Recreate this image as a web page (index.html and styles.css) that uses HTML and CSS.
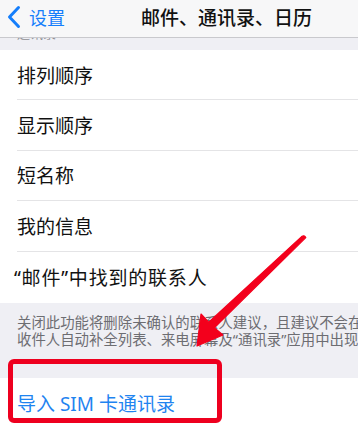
FILE: index.html
```html
<!DOCTYPE html>
<html lang="zh-CN">
<head>
  <meta charset="UTF-8" />
  <meta name="viewport" content="width=device-width, initial-scale=1.0"/>
  <title>邮件、通讯录、日历</title>
  <link rel="stylesheet" href="styles.css">
</head>
<body>
  <div class="navbar">
    <div class="back">
      <svg class="chevron" width="16" height="24" viewBox="0 0 16 24">
        <path d="M12.5 2.5 L3.5 12 L12.5 21.5" fill="none" stroke="#157efb" stroke-width="3" stroke-linecap="round" stroke-linejoin="round"/>
      </svg>
      <span>设置</span>
    </div>
    <div class="title">邮件、通讯录、日历</div>
  </div>

  <div class="group-header"><span>通讯录</span></div>

  <ul class="list">
    <li>排列顺序</li>
    <li>显示顺序</li>
    <li>短名称</li>
    <li>我的信息</li>
    <li class="last">“邮件”中找到的联系人</li>
  </ul>

  <div class="group-footer">
    关闭此功能将删除未确认的联系人建议，且建议不会在<br>
    收件人自动补全列表、来电屏幕及“通讯录”应用中出现。
  </div>

  <ul class="list">
    <li class="link">导入 SIM 卡通讯录</li>
  </ul>

  <!-- annotation drawn over the screenshot -->
  <div class="mark-box"></div>
  <svg class="mark-arrow" width="358" height="425" viewBox="0 0 358 425">
    <path d="M197 346 L201 314 L208.7 322.2 L301.6 236.6 Q304.4 234.5 305.8 237.6 L214.3 327.8 L223 335 Z"
          fill="#f3001c" stroke="#f3001c" stroke-width="1.2" stroke-linejoin="round"/>
  </svg>
</body>
</html>
```

FILE: styles.css
```css
body {
  margin: 0;
  font-family: "Noto Sans", "Noto Sans CJK SC", sans-serif;
  background-color: #efeff4;
  width: 358px;
  height: 425px;
  overflow: hidden;
  position: relative;
}
.navbar {
  height: 37px;
  background-color: #f7f7f8;
  border-bottom: 1px solid #c9c9cd;
  display: flex;
  align-items: center;
}
.back {
  display: flex;
  align-items: center;
  padding-left: 6px;
  color: #157efb;
  font-size: 18px;
  margin-top: -4px;
}
.chevron {
  margin-right: 7px;
}
.title {
  margin-left: 76px;
  font-size: 19px;
  font-weight: 500;
  color: #111;
  margin-top: -4px;
}
.group-header {
  height: 12px;
  overflow: hidden;
  padding-left: 17px;
}
.group-header span {
  display: block;
  margin-top: -11px;
  font-size: 13px;
  line-height: 13px;
  color: #8e8e93;
}
.list {
  list-style: none;
  margin: 0;
  padding: 0 0 0 17px;
  background-color: #fff;
}
.list li {
  height: 50.4px;
  box-sizing: border-box;
  border-bottom: 1px solid #e4e4e6;
  display: flex;
  align-items: center;
  font-size: 19px;
  color: #111;
}
.list li.last {
  border-bottom: none;
  height: 51px;
  margin-left: -3px;
  letter-spacing: 0.8px;
}
.list li.link {
  border-bottom: none;
  color: #1f84f0;
  height: 50px;
}
.group-footer {
  height: 75px;
  box-sizing: border-box;
  padding: 11px 0 0 17px;
  font-size: 14.4px;
  line-height: 17.5px;
  color: #6d6d72;
  white-space: nowrap;
  overflow: hidden;
}
.mark-box {
  position: absolute;
  left: 8px;
  top: 359px;
  width: 204px;
  height: 54px;
  border: 5px solid #ee001f;
  border-radius: 6px;
}
.mark-arrow {
  position: absolute;
  left: 0;
  top: 0;
}
```
